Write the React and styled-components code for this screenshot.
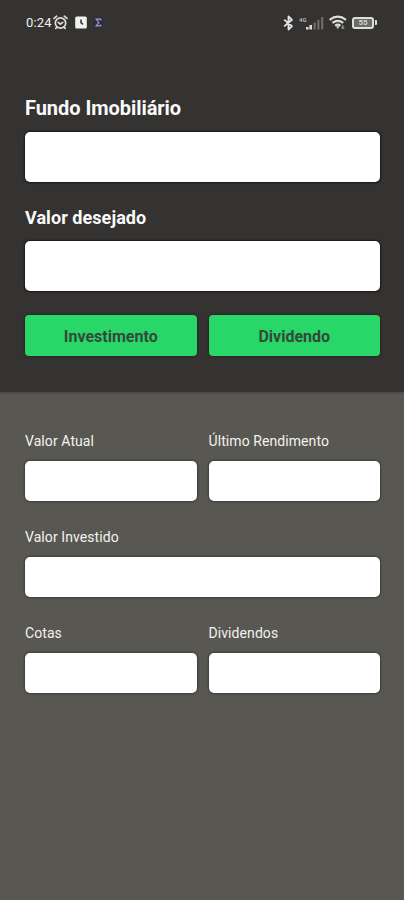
import styled, { createGlobalStyle } from "styled-components"

const GlobalStyle = createGlobalStyle`
    * {
        box-sizing: border-box;
    }
    body {
        margin: 0;
        background-color: #585752;
        font-family: Roboto, "Liberation Sans", sans-serif;
    }
`

const Screen = styled.div`
    display: flex;
    flex-direction: column;
    width: 100%;
    min-height: 900px;
    background-color: #585752;
`

const Header = styled.header`
    display: flex;
    flex-direction: column;
    height: 392px;
    background-color: #353331;
    box-shadow: 0 1px 2px #45433f;
`

const StatusBar = styled.div`
    display: flex;
    align-items: center;
    justify-content: space-between;
    height: 45px;
    padding: 0 27px 0 26px;
`

const StatusGroup = styled.div`
    display: flex;
    align-items: center;
    gap: ${(props) => props.$gap}px;
`

const Clock = styled.span`
    width: 26px;
    font-size: 13px;
    line-height: 16px;
    letter-spacing: 0.15px;
    white-space: nowrap;
    color: #f0f0ee;
`

const SearchForm = styled.div`
    display: flex;
    flex-direction: column;
    padding: 51px 24px 0 25px;
`

const Results = styled.main`
    display: grid;
    grid-template-columns: 1fr 1fr;
    column-gap: 12px;
    row-gap: 26px;
    padding: 39px 24px 0 25px;
`

const Field = styled.div`
    display: flex;
    flex-direction: column;
    grid-column: ${(props) => (props.$wide ? "1 / -1" : "auto")};
`

const Title = styled.label`
    height: ${(props) => props.$height}px;
    font-size: ${(props) => props.$size}px;
    line-height: 25px;
    font-weight: bold;
    letter-spacing: ${(props) => props.$spacing}px;
    white-space: nowrap;
    color: #fafafa;
`

const Label = styled.label`
    height: 30px;
    font-size: 14px;
    line-height: 20px;
    letter-spacing: 0.08px;
    white-space: nowrap;
    color: #f2f2f0;
`

const Input = styled.input`
    width: 100%;
    height: 50px;
    margin: 0 0 ${(props) => props.$bottom}px;
    padding: 0 12px;
    border: none;
    border-radius: 5px;
    outline: none;
    background-color: white;
    box-shadow: 0 0 2px 1px #171615;
    font: 16px Roboto, sans-serif;
`

const Output = styled.div`
    height: 40px;
    border-radius: 5px;
    background-color: white;
    box-shadow: 0 0 2px 1px #3d3c38;
`

const Buttons = styled.div`
    display: grid;
    grid-template-columns: 1fr 1fr;
    gap: 12px;
`

const Button = styled.button`
    height: 41px;
    padding: 1px 0 0;
    border: none;
    border-radius: 4px;
    background-color: #28d768;
    box-shadow: 0 0 2px 1px #292725;
    font: bold 16px Roboto, sans-serif;
    color: #33493a;
`

const BatteryLevel = styled.span`
    display: flex;
    align-items: center;
    justify-content: center;
    width: 22px;
    height: 12px;
    border: 2px solid #dededc;
    border-radius: 3px;
    font-size: 8px;
    font-weight: bold;
    line-height: 8px;
    color: #d2d2d0;
    background-color: #6d6b69;
`

const Battery = styled.div`
    display: flex;
    align-items: center;
    &::after {
        content: "";
        width: 2px;
        height: 5px;
        margin-left: 1px;
        border-radius: 0 1px 1px 0;
        background-color: #dededc;
    }
`

const SignalBars = styled.div`
    display: flex;
    align-items: flex-end;
    width: 25px;
    height: 14px;
`

const Network = styled.span`
    align-self: flex-start;
    width: 7px;
    font-size: 6px;
    font-weight: bold;
    line-height: 7px;
    color: #b5b4b2;
`

const AlarmIcon = () => (
    <svg width="15" height="15" viewBox="0 0 15 15" fill="none" stroke="#dededc" strokeWidth="1.7" strokeLinecap="round">
        <circle cx="7.5" cy="8" r="5.2" />
        <path d="M1 3.4 3.7 1.2M14 3.4 11.3 1.2M5.3 7.4l2 1.8 2.4-1.8M3.8 12l-1 1.4M11.2 12l1 1.4" />
    </svg>
)

const ClockTile = () => (
    <svg width="12" height="13" viewBox="0 0 12 13">
        <rect x="0.2" y="0.5" width="11.6" height="12" rx="1.5" fill="#f1f1ef" />
        <path d="M6 3.5v3.2l2 1.8" fill="none" stroke="#353331" strokeWidth="1.6" />
    </svg>
)

const SigmaTile = () => (
    <svg width="9" height="11" viewBox="0 0 9 11">
        <rect width="9" height="11" rx="1" fill="#2b2b42" />
        <path d="M6.8 3.4V2.2H2.2l2.6 3.3-2.6 3.3h4.6V7.6" fill="none" stroke="#a3a4bd" strokeWidth="1.2" />
    </svg>
)

const BluetoothIcon = () => (
    <svg width="11" height="16" viewBox="0 0 11 16" fill="none" stroke="#e5e5e3" strokeWidth="1.8" strokeLinejoin="round">
        <path d="M1.2 4.6 9 11.2 5.5 14.5v-13L9 4.8l-7.8 6.6" />
    </svg>
)

const SignalIcon = () => (
    <svg width="18" height="14" viewBox="0 0 18 14">
        <path d="M0 11h2.6v2.5H0zM3.4 9H6v4.5H3.4z" fill="#dededc" />
        <path d="M7.6 6.5h2v7h-2zM11.4 4h2v9.5h-2zM15.2 1h2v12.5h-2z" fill="#73716e" />
    </svg>
)

const WifiIcon = () => (
    <svg width="18" height="15" viewBox="0 0 18 15" fill="none" stroke="#dededc" strokeWidth="2.1">
        <path d="M0.6 4.8q8.2-6.2 16.4 0M3.4 7.9q5.4-4.2 10.8 0M6.1 10.7q2.7-2.2 5.4 0" />
        <path d="M7 11.2h3.6L8.8 14z" fill="#dededc" stroke="none" />
        <path d="M13.8 10v3.6M12.5 12.3l1.3 1.5 1.4-1.5" stroke="#b5b4b2" strokeWidth="1" />
    </svg>
)

const results = [
    { label: "Valor Atual" },
    { label: "Último Rendimento" },
    { label: "Valor Investido", wide: true },
    { label: "Cotas" },
    { label: "Dividendos" },
]

const App = () => {
    return (
        <Screen>
            <GlobalStyle />
            <Header>
                <StatusBar>
                    <StatusGroup $gap={7}>
                        <StatusGroup $gap={1}>
                            <Clock>0:24</Clock>
                            <AlarmIcon />
                        </StatusGroup>
                        <ClockTile />
                        <SigmaTile />
                    </StatusGroup>
                    <StatusGroup $gap={5}>
                        <BluetoothIcon />
                        <SignalBars>
                            <Network>4G</Network>
                            <SignalIcon />
                        </SignalBars>
                        <WifiIcon />
                        <Battery>
                            <BatteryLevel>55</BatteryLevel>
                        </Battery>
                    </StatusGroup>
                </StatusBar>
                <SearchForm>
                    <Title htmlFor="fundo" $size={20} $height={36} $spacing={-0.05}>Fundo Imobiliário</Title>
                    <Input id="fundo" $bottom={22.5} />
                    <Title htmlFor="valor" $size={18} $height={36} $spacing={0.06}>Valor desejado</Title>
                    <Input id="valor" $bottom={24.5} />
                    <Buttons>
                        <Button>Investimento</Button>
                        <Button>Dividendo</Button>
                    </Buttons>
                </SearchForm>
            </Header>
            <Results>
                {results.map((item) => (
                    <Field key={item.label} $wide={item.wide}>
                        <Label>{item.label}</Label>
                        <Output />
                    </Field>
                ))}
            </Results>
        </Screen>
    )
}

export default App
